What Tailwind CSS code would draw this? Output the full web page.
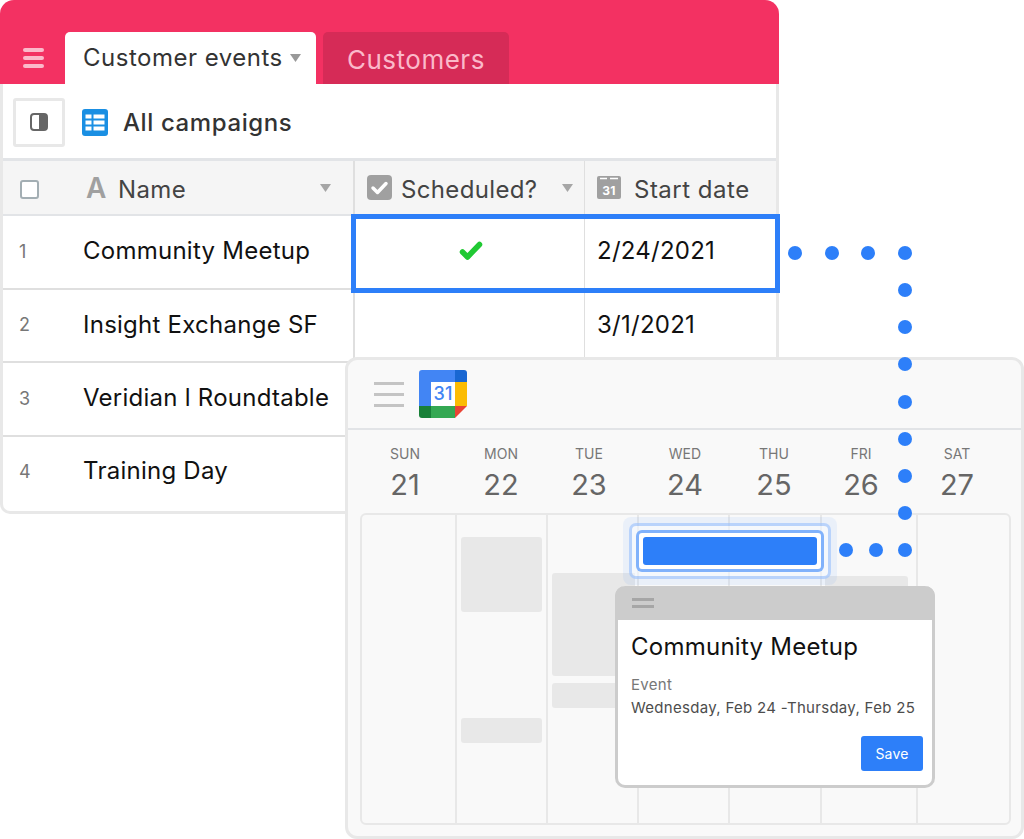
<!DOCTYPE html>
<html lang="en">
<head>
    <meta charset="UTF-8">
    <meta name="viewport" content="width=device-width, initial-scale=1.0">
    <title>Customer events</title>
    <script src="https://cdn.jsdelivr.net/npm/@tailwindcss/browser@4"></script>
</head>
<body class="bg-white font-['Inter',sans-serif]">
<div class="relative w-[1024px] h-[839px] overflow-hidden">

    <!-- Base window -->
    <div class="absolute left-0 top-0 w-[779px] h-[514px] flex flex-col">
        <div class="h-[84px] shrink-0 bg-[#f33162] rounded-t-[14px] flex items-end">
            <div class="w-[65px] h-[52px] flex flex-col justify-center items-center gap-[4px] pb-[1px] pl-[2px]">
                <span class="w-[21px] h-[4px] rounded-full bg-[#fbb9ca]"></span>
                <span class="w-[21px] h-[4px] rounded-full bg-[#fbb9ca]"></span>
                <span class="w-[21px] h-[4px] rounded-full bg-[#fbb9ca]"></span>
            </div>
            <div class="w-[251px] h-[52px] bg-white rounded-t-[5px] flex items-center pl-[18px] pb-[1px] text-[24px] tracking-[0.5px] text-[#333]">
                <span>Customer events</span>
                <svg class="ml-[7px] mt-[1px]" width="11" height="8" viewBox="0 0 11 8"><path d="M0 0h11L5.500 8z" fill="#999"/></svg>
            </div>
            <div class="ml-[7px] w-[186px] h-[52px] bg-[#d62b57] rounded-t-[5px] flex items-center pl-[24px] pt-[3px] text-[26px] tracking-[0.5px] text-[#fbb9ca]">Customers</div>
        </div>

        <div class="flex-1 flex flex-col border-x-[3px] border-b-[3px] border-[#e8e8e8] rounded-b-[10px] overflow-hidden">
            <div class="h-[74px] shrink-0 flex items-center pl-[10px] pt-[2px]">
                <div class="w-[52px] h-[49px] border-[3px] border-[#e8e8e8] rounded-[3px] flex items-center justify-center">
                    <svg width="18" height="18" viewBox="0 0 18 18"><rect x="1" y="1" width="16" height="16" rx="3" fill="#fff" stroke="#666" stroke-width="2"/><path d="M9 1h5a3 3 0 0 1 3 3v10a3 3 0 0 1-3 3H9z" fill="#666"/></svg>
                </div>
                <svg class="ml-[17px]" width="26" height="27" viewBox="0 0 26 27"><rect width="26" height="27" rx="3" fill="#1a8fe3"/><path d="M3.500 5.500h6v4h-6zM11.500 5.500h11v4h-11zM3.500 11.500h6v4h-6zM11.500 11.500h11v4h-11zM3.500 17.500h6v4h-6zM11.500 17.500h11v4h-11z" fill="#fff"/></svg>
                <span class="ml-[15px] mt-[2px] text-[24px] tracking-[0.6px] font-medium text-[#333]">All campaigns</span>
            </div>

            <div class="h-[58px] shrink-0 flex bg-[#f5f5f5] border-t-[3px] border-b-[2px] border-[#e2e4e7] text-[24px] tracking-[0.35px] text-[#444]">
                <div class="w-[352px] flex items-center border-r-[2px] border-[#dfdfdf] pl-[17px] pr-[22px]">
                    <span class="mt-[4px] w-[19px] h-[19px] bg-white border-[2px] border-[#a3aeb3] rounded-[3px]"></span>
                    <span class="ml-[47px] w-[22px] text-[28px] font-semibold text-[#a0a0a0] leading-none">A</span>
                    <span class="ml-[10px] mt-[4px] flex-1">Name</span>
                    <svg width="11" height="8" viewBox="0 0 11 8"><path d="M0 0h11L5.500 8z" fill="#a6a6a6"/></svg>
                </div>
                <div class="w-[230px] flex items-center border-r-[1px] border-[#dfdfdf] pl-[12px] pr-[11px]">
                    <svg width="25" height="25" viewBox="0 0 25 25"><rect width="25" height="25" rx="4" fill="#a0a0a0"/><path d="M6 13l4.500 4.500L19 8.500" fill="none" stroke="#fff" stroke-width="3.500" stroke-linecap="round" stroke-linejoin="round"/></svg>
                    <span class="ml-[9px] mt-[4px] flex-1">Scheduled?</span>
                    <svg width="11" height="8" viewBox="0 0 11 8"><path d="M0 0h11L5.500 8z" fill="#a6a6a6"/></svg>
                </div>
                <div class="flex-1 flex items-center pl-[12px] whitespace-nowrap">
                    <svg width="24" height="23" viewBox="0 0 24 23"><rect width="24" height="23" rx="2" fill="#a0a0a0"/><path d="M3 2.500h7M13 2.500h8" stroke="#fff" stroke-width="1.500"/><text x="12" y="19" text-anchor="middle" font-family="Inter" font-size="12" font-weight="700" fill="#fff">31</text></svg>
                    <span class="ml-[13px] mt-[4px] tracking-[0.5px]">Start date</span>
                </div>
            </div>

            <div class="h-[74px] shrink-0 flex items-center border-b-[2px] border-[#dfdfdf] text-[24px] tracking-[0.25px] text-[#111]">
                <div class="w-[352px] h-full flex items-center border-r-[2px] border-[#dfdfdf] pb-[2px]">
                    <span class="w-[80px] pl-[16px] text-[18px] text-[#777]">1</span>
                    <span>Community Meetup</span>
                </div>
                <div class="w-[230px] h-full flex items-center justify-center border-r-[1px] border-[#dfdfdf] pb-[3px] pl-[2px]">
                    <svg width="24" height="20" viewBox="0 0 24 20"><path d="M3.500 11l5 5L20.500 3.500" fill="none" stroke="#20c933" stroke-width="5.500" stroke-linecap="round" stroke-linejoin="round"/></svg>
                </div>
                <span class="pl-[12px] pb-[2px]">2/24/2021</span>
            </div>
            <div class="h-[73px] shrink-0 flex items-center border-b-[2px] border-[#dfdfdf] text-[24px] tracking-[0.25px] text-[#111]">
                <div class="w-[352px] h-full flex items-center border-r-[2px] border-[#dfdfdf] pb-[2px]">
                    <span class="w-[80px] pl-[16px] text-[18px] text-[#777]">2</span>
                    <span>Insight Exchange SF</span>
                </div>
                <div class="w-[230px] h-full border-r-[1px] border-[#dfdfdf]"></div>
                <span class="pl-[12px] pb-[2px]">3/1/2021</span>
            </div>
            <div class="h-[74px] shrink-0 flex items-center border-b-[2px] border-[#dfdfdf] text-[24px] tracking-[0.25px] text-[#111]">
                <div class="w-[352px] h-full flex items-center pb-[2px]">
                    <span class="w-[80px] pl-[16px] text-[18px] text-[#777]">3</span>
                    <span>Veridian l Roundtable</span>
                </div>
            </div>
            <div class="flex-1 flex items-center text-[24px] tracking-[0.25px] text-[#111] pb-[6px]">
                <span class="w-[80px] pl-[16px] text-[18px] text-[#777]">4</span>
                <span>Training Day</span>
            </div>
        </div>
    </div>

    <!-- Selected cells -->
    <div class="absolute left-[351px] top-[214px] w-[429px] h-[79px] border-[5px] border-[#2d7ff9]"></div>

    <!-- Calendar window -->
    <div class="absolute left-[345px] top-[357px] w-[679px] h-[482px] flex flex-col bg-[#f9f9f9] border-[3px] border-[#e8e8e8] rounded-[12px]">
        <div class="h-[70px] shrink-0 flex items-center border-b-[2px] border-[#e2e4e7] pl-[26px]">
            <div class="w-[30px] flex flex-col gap-[8px]">
                <span class="h-[3px] bg-[#c4c4c4]"></span>
                <span class="h-[3px] bg-[#c4c4c4]"></span>
                <span class="h-[3px] bg-[#c4c4c4]"></span>
            </div>
            <svg class="ml-[15px]" width="48" height="48" viewBox="0 0 48 48">
                <path d="M3 0h33v12H12v24H0V3a3 3 0 0 1 3-3z" fill="#4285f4"/>
                <path d="M36 0h9a3 3 0 0 1 3 3v9H36z" fill="#1967d2"/>
                <rect x="36" y="12" width="12" height="24" fill="#fbbc04"/>
                <rect x="12" y="36" width="24" height="12" fill="#34a853"/>
                <path d="M0 36h12v12H3a3 3 0 0 1-3-3z" fill="#188038"/>
                <path d="M36 36h12L36 48z" fill="#ea4335"/>
                <rect x="12" y="12" width="24" height="24" fill="#fff"/>
                <text x="24" y="30" text-anchor="middle" font-family="Inter" font-size="18" font-weight="500" fill="#4285f4">31</text>
            </svg>
        </div>

        <div class="h-[83px] shrink-0 pl-[9px] pt-[14px] grid grid-cols-[96px_96px_80px_112px_66px_108px_84px] text-center text-[#777]">
            <div><p class="text-[14px] leading-[19px]">SUN</p><p class="mt-[2px] text-[29px] leading-[40px] text-[#666]">21</p></div>
            <div><p class="text-[14px] leading-[19px]">MON</p><p class="mt-[2px] text-[29px] leading-[40px] text-[#666]">22</p></div>
            <div><p class="text-[14px] leading-[19px]">TUE</p><p class="mt-[2px] text-[29px] leading-[40px] text-[#666]">23</p></div>
            <div><p class="text-[14px] leading-[19px]">WED</p><p class="mt-[2px] text-[29px] leading-[40px] text-[#666]">24</p></div>
            <div><p class="text-[14px] leading-[19px]">THU</p><p class="mt-[2px] text-[29px] leading-[40px] text-[#666]">25</p></div>
            <div><p class="text-[14px] leading-[19px]">FRI</p><p class="mt-[2px] text-[29px] leading-[40px] text-[#666]">26</p></div>
            <div><p class="text-[14px] leading-[19px]">SAT</p><p class="mt-[2px] text-[29px] leading-[40px] text-[#666]">27</p></div>
        </div>

        <div class="ml-[12px] w-[651px] h-[312px] flex border-[2px] border-[#e8e8e8] rounded-[6px]">
            <div class="w-[95px] border-r-[2px] border-[#e8e8e8]"></div>
            <div class="w-[91px] border-r-[2px] border-[#e8e8e8] pl-[4px] pr-[4px]">
                <div class="mt-[22px] h-[75px] bg-[#e8e8e8] rounded-[3px]"></div>
                <div class="mt-[106px] h-[25px] bg-[#e8e8e8] rounded-[3px]"></div>
            </div>
            <div class="w-[91px] border-r-[2px] border-[#e8e8e8] pl-[4px] pr-[2px]">
                <div class="mt-[58px] h-[103px] bg-[#e8e8e8] rounded-l-[3px]"></div>
                <div class="mt-[7px] h-[25px] bg-[#e8e8e8] rounded-l-[3px]"></div>
            </div>
            <div class="w-[91px] border-r-[2px] border-[#e8e8e8]"></div>
            <div class="w-[92px] border-r-[2px] border-[#e8e8e8]"></div>
            <div class="w-[96px] border-r-[2px] border-[#e8e8e8] pl-[3px] pr-[8px]">
                <div class="mt-[61px] h-[24px] bg-[#e8e8e8] rounded-[3px]"></div>
            </div>
            <div class="flex-1"></div>
        </div>
    </div>

    <!-- Event with focus rings -->
    <div class="absolute left-[623px] top-[517px] w-[214px] h-[68px] p-[6px] rounded-[8px] bg-[#2d7ff9]/7">
        <div class="w-full h-full p-[4px] rounded-[7px] border-[3px] border-[#2d7ff9]/30 bg-white/50">
            <div class="w-full h-full p-[4px] rounded-[6px] border-[3px] border-[#2d7ff9]/60 bg-white">
                <div class="w-full h-full rounded-[3px] bg-[#2d7ff9]"></div>
            </div>
        </div>
    </div>

    <!-- Event popup -->
    <div class="absolute left-[615px] top-[586px] w-[320px] h-[202px] flex flex-col bg-white border-x-[3px] border-b-[3px] border-[#cccccc] rounded-[10px]">
        <div class="h-[34px] shrink-0 -mx-[3px] bg-[#cccccc] rounded-t-[10px] flex flex-col justify-center gap-[4px] pl-[17px]">
            <span class="w-[22px] h-[3px] bg-[#a6a6a6]"></span>
            <span class="w-[22px] h-[3px] bg-[#a6a6a6]"></span>
        </div>
        <div class="flex-1 flex flex-col pl-[13px] pr-[9px] pt-[11px]">
            <p class="text-[24px] leading-[32px] tracking-[0.25px] text-[#111]">Community Meetup</p>
            <p class="mt-[12px] text-[15px] leading-[20px] tracking-[0.3px] text-[#777]">Event</p>
            <p class="mt-[2px] text-[15px] leading-[22px] tracking-[0.3px] text-[#4d4d4d] whitespace-nowrap">Wednesday, Feb 24 -Thursday, Feb 25</p>
            <button class="self-end mt-[17px] w-[62px] h-[35px] rounded-[3px] bg-[#2d7ff9] text-[14px] tracking-[0.2px] text-white">Save</button>
        </div>
    </div>

    <!-- Connector dots -->
    <div class="absolute left-[788px] top-[246px] flex gap-[22.700px]">
        <span class="w-[14px] h-[14px] rounded-full bg-[#2d7ff9]"></span>
        <span class="w-[14px] h-[14px] rounded-full bg-[#2d7ff9]"></span>
        <span class="w-[14px] h-[14px] rounded-full bg-[#2d7ff9]"></span>
    </div>
    <div class="absolute left-[898px] top-[246px] flex flex-col gap-[23.125px]">
        <span class="w-[14px] h-[14px] rounded-full bg-[#2d7ff9]"></span>
        <span class="w-[14px] h-[14px] rounded-full bg-[#2d7ff9]"></span>
        <span class="w-[14px] h-[14px] rounded-full bg-[#2d7ff9]"></span>
        <span class="w-[14px] h-[14px] rounded-full bg-[#2d7ff9]"></span>
        <span class="w-[14px] h-[14px] rounded-full bg-[#2d7ff9]"></span>
        <span class="w-[14px] h-[14px] rounded-full bg-[#2d7ff9]"></span>
        <span class="w-[14px] h-[14px] rounded-full bg-[#2d7ff9]"></span>
        <span class="w-[14px] h-[14px] rounded-full bg-[#2d7ff9]"></span>
        <span class="w-[14px] h-[14px] rounded-full bg-[#2d7ff9]"></span>
    </div>
    <div class="absolute left-[839px] top-[543px] flex gap-[15.500px]">
        <span class="w-[14px] h-[14px] rounded-full bg-[#2d7ff9]"></span>
        <span class="w-[14px] h-[14px] rounded-full bg-[#2d7ff9]"></span>
    </div>
</div>
</body>
</html>
